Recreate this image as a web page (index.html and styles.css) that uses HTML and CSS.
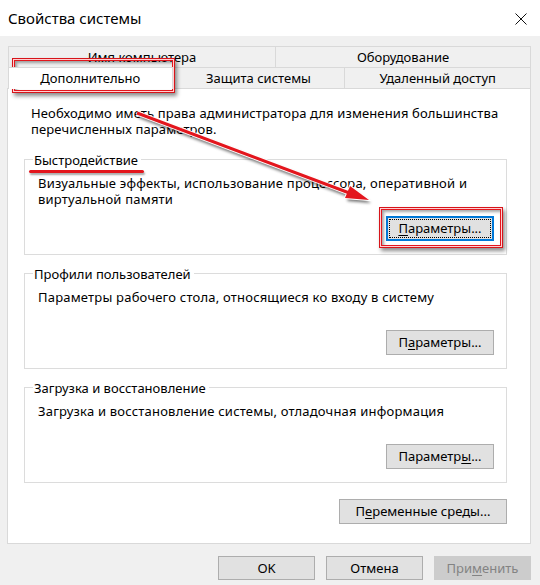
FILE: index.html
```html
<!DOCTYPE html>
<html lang="ru">
<head>
<meta charset="utf-8">
<title>Свойства системы</title>
<link rel="stylesheet" href="styles.css">
</head>
<body>
<div class="window">
  <div class="titlebar">
    <span class="title">Свойства системы</span>
    <svg class="close" width="12" height="12" viewBox="0 0 12 12"><path d="M0.5 0.5 L11.5 11.5 M11.5 0.5 L0.5 11.5" stroke="#111" stroke-width="1" fill="none"/></svg>
  </div>
  <div class="body">
    <div class="tabs">
      <div class="tabrow row1">
        <div class="tab t-name">Имя компьютера</div>
        <div class="tab t-hw">Оборудование</div>
      </div>
      <div class="tabrow row2">
        <div class="tab t-adv selected">Дополнительно</div>
        <div class="tab t-prot">Защита системы</div>
        <div class="tab t-remote">Удаленный доступ</div>
      </div>
    </div>
    <div class="panel">
      <p class="intro">Необходимо иметь права администратора для изменения большинства перечисленных параметров.</p>
      <div class="group">
        <div class="legend"><span class="legend-text perf">Быстродействие</span></div>
        <p class="desc">Визуальные эффекты, использование процессора, оперативной и виртуальной памяти</p>
        <div class="actions"><button class="btn focused"><span class="focusrect"><u>П</u>араметры...</span></button></div>
      </div>
      <div class="group">
        <div class="legend"><span class="legend-text">Профили пользователей</span></div>
        <p class="desc">Параметры рабочего стола, относящиеся ко входу в систему</p>
        <div class="actions"><button class="btn">П<u>а</u>раметры...</button></div>
      </div>
      <div class="group">
        <div class="legend"><span class="legend-text">Загрузка и восстановление</span></div>
        <p class="desc">Загрузка и восстановление системы, отладочная информация</p>
        <div class="actions"><button class="btn">Параметр<u>ы</u>...</button></div>
      </div>
      <div class="env-row"><button class="btn env">П<u>е</u>ременные среды...</button></div>
    </div>
    <div class="footer">
      <button class="btn dlg">OK</button>
      <button class="btn dlg">Отмена</button>
      <button class="btn dlg disabled">При<u>м</u>енить</button>
    </div>
  </div>
</div>
<div class="overlay">
  <div class="mark mark-tab"></div>
  <div class="mark mark-btn"></div>
  <svg class="arrow" width="540" height="585" viewBox="0 0 540 585">
    <defs>
      <filter id="sh" x="-20%" y="-20%" width="140%" height="140%">
        <feGaussianBlur stdDeviation="1.5"/>
      </filter>
    </defs>
    <g transform="translate(2,3)" filter="url(#sh)" opacity="0.55">
      <line x1="137" y1="113" x2="352" y2="194" stroke="#000" stroke-width="4"/>
      <polygon points="369,200 345,198 350,186" fill="#000"/>
    </g>
    <line x1="137" y1="113" x2="352" y2="194" stroke="#fff" stroke-width="5"/>
    <polygon points="369,200 345,198 350,186" fill="#fff" stroke="#fff" stroke-width="2"/>
    <line x1="137" y1="113" x2="352" y2="194" stroke="#e3161d" stroke-width="3"/>
    <polygon points="369,200 345,198 350,186" fill="#e3161d"/>
  </svg>
</div>
</body>
</html>
```

FILE: styles.css
```css
* { box-sizing: border-box; }
html, body { margin: 0; padding: 0; }
body {
  width: 540px;
  height: 585px;
  overflow: hidden;
  background: #f0f0f0;
  font-family: "Noto Sans", "Segoe UI", "Liberation Sans", sans-serif;
  font-size: 13px;
  color: #000;
  position: relative;
}
.window { width: 540px; height: 585px; display: flex; flex-direction: column; }
.titlebar {
  height: 36px;
  background: #fff;
  display: flex;
  align-items: center;
  justify-content: space-between;
  padding: 0 13px 0 8px;
}
.title { font-size: 15px; color: #000; }
.close { display: block; margin-top: 2px; }

.body { padding: 10px 9px 0 7px; display: flex; flex-direction: column; }

.tabs { width: 524px; display: flex; flex-direction: column; padding-left: 1px; }
.tabrow { display: flex; height: 21px; }
.tab {
  border: 1px solid #d9d9d9;
  border-bottom: none;
  background: #f0f0f0;
  display: flex;
  align-items: center;
  justify-content: center;
  line-height: 1;
  margin-left: -1px;
}
.tab:first-child { margin-left: 0; }
.t-name { width: 268px; }
.t-hw { width: 256px; }
.t-adv { width: 165px; }
.t-prot { width: 174px; }
.t-remote { width: 187px; }
.tab.selected { background: #fff; position: relative; z-index: 2; height: 22px; }

.panel {
  width: 524px;
  height: 456px;
  background: #fff;
  border: 1px solid #d9d9d9;
  padding: 16px 23px 0 16px;
  display: flex;
  flex-direction: column;
}
.intro { margin: 0 0 0 7px; line-height: 16px; letter-spacing: 0.12px; }
.group {
  width: 483px;
  height: 96px;
  border: 1px solid #dcdcdc;
  margin-top: 22px;
  padding: 0 12px 0 13px;
  display: flex;
  flex-direction: column;
}
.group + .group { margin-top: 18px; }
.legend { height: 0; position: relative; }
.legend-text {
  position: relative;
  top: -9px;
  margin-left: -5px;
  padding: 0 3px 0 1px;
  background: #fff;
  line-height: 16px;
  display: inline-block;
}
.perf::after {
  content: "";
  position: absolute;
  left: -4px;
  right: -3px;
  top: 18px;
  height: 3px;
  background: #e3161d;
  border-radius: 2px;
  box-shadow: 1px 2px 2px rgba(0,0,0,.35);
}
.desc { margin: 15px 0 0 0; line-height: 16px; letter-spacing: 0.2px; }
.actions { margin-top: auto; margin-bottom: 13px; display: flex; justify-content: flex-end; }

.btn {
  font-family: inherit;
  font-size: 13px;
  color: #000;
  background: #e1e1e1;
  border: 1px solid #adadad;
  height: 25px;
  width: 108px;
  padding: 0;
  display: flex;
  align-items: center;
  justify-content: center;
  line-height: 1;
}
.btn u { text-decoration: underline; text-underline-offset: 2px; }
.btn.focused { border: 2px solid #0078d7; padding: 1px; }
.focusrect {
  border: 1px dotted #000;
  width: 100%;
  height: 100%;
  display: flex;
  align-items: center;
  justify-content: center;
}
.env-row { display: flex; justify-content: flex-end; margin-top: 16px; }
.btn.env { width: 168px; }

.footer {
  display: flex;
  justify-content: flex-end;
  gap: 11px;
  margin-top: 12px;
  padding-right: 0;
}
.btn.dlg { width: 97px; height: 24px; }
.btn.disabled { background: #cccccc; border-color: #cccccc; color: #838383; }

.overlay { position: absolute; left: 0; top: 0; width: 540px; height: 585px; pointer-events: none; }
.mark {
  position: absolute;
  border: 1px solid #d7141a;
  box-shadow: inset 0 0 0 1px #ffd0d2, inset 0 0 0 2px #e3161d, inset 2px 2px 3px 2px rgba(0,0,0,.35), 2px 3px 4px rgba(0,0,0,.45);
}
.mark-tab { left: 12px; top: 58px; width: 163px; height: 35px; }
.mark-btn { left: 379px; top: 207px; width: 124px; height: 41px; }
.arrow { position: absolute; left: 0; top: 0; }
```
